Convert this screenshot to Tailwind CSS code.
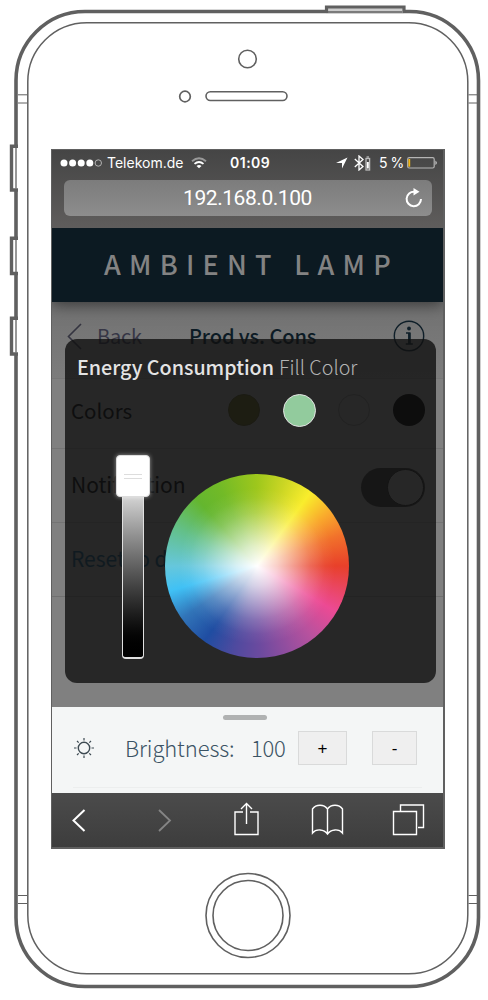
<!DOCTYPE html>
<html lang="en">
<head>
<meta charset="utf-8">
<title>Ambient Lamp</title>
<script src="https://cdn.jsdelivr.net/npm/@tailwindcss/browser@4"></script>
</head>
<body class="bg-white">
<main class="relative h-[1000px] w-[488px] overflow-hidden bg-white pt-[149px] pl-[51px] font-['Noto_Sans_CJK_SC','Noto_Sans',sans-serif]">
  <!-- Device outline -->
  <svg class="absolute top-0 left-0" width="488" height="1000" fill="none" stroke="#606060">
    <rect x="16" y="11.5" width="462.5" height="975" rx="69" stroke-width="3.6"/>
    <rect x="27.8" y="22.7" width="440" height="951" rx="59" stroke-width="1.5"/>
    <path d="M18 94.8H27M18 103H27M468.500 94.800H477M468.500 103H477M18 895.500H27M18 903.500H27M468.500 895.500H477M468.500 903.500H477" stroke-width="1"/>
    <path d="M326 7H404V13.500H326Z" fill="#ccc" stroke="none"/>
    <path d="M328 12H402" stroke-width="1.300"/>
    <path d="M326.500 13V7H404V13" stroke-width="3.200"/>
    <g fill="#fff">
      <path d="M13 146H18V191H13ZM13 238H18V274H13ZM13 318H18V355H13Z" stroke="none"/>
      <path d="M18 146.300H11.500V190H18M18 238.300H11.500V273.500H18M18 318.300H11.500V354H18" stroke-width="3.400"/>
      <path d="M16 148V188.500M16 240V272M16 320V352.500" stroke-width="1.300"/>
    </g>
    <circle cx="247.500" cy="59" r="8.800" stroke-width="1.600"/>
    <circle cx="185" cy="96.500" r="5.300" stroke-width="1.700"/>
    <rect x="206" y="91.700" width="81" height="8.800" rx="4.400" stroke-width="1.600"/>
    <circle cx="248" cy="915.500" r="42" stroke-width="1.600"/>
    <circle cx="248" cy="915.500" r="35" stroke-width="1.600"/>
  </svg>

  <div class="relative flex h-[700px] w-[394px] flex-col overflow-hidden border-t border-r-2 border-b-2 border-l border-[#606060] bg-[#808080]">
    <!-- Browser chrome -->
    <header class="relative z-2 h-[78px] shrink-0 bg-linear-to-b from-[#454545] to-[#5f5d5c] text-white">
      <div class="flex h-[26px] items-center pl-[8px] font-['Inter',sans-serif] text-[14px] leading-none">
        <svg width="42" height="10" fill="#fff"><circle cx="4" cy="5" r="3.500"/><circle cx="12.600" cy="5" r="3.500"/><circle cx="21.200" cy="5" r="3.500"/><circle cx="29.800" cy="5" r="3.500"/><circle cx="38.300" cy="5" r="3.200" fill="none" stroke="#ccc" stroke-width=".8"/></svg>
        <span class="ml-[5px] w-[79px] whitespace-nowrap">Telekom.de</span>
        <svg class="ml-[5px]" width="16" height="12" viewBox="0 0 16 12" fill="none" stroke="#fff" stroke-width="1.800"><path d="M1 4.300Q8-1.700 15 4.300" stroke="#999"/><path d="M3.500 6.900Q8 3 12.500 6.900"/><path d="M8 11.300L5.500 8.900Q8 7 10.500 8.900Z" fill="#fff" stroke="none"/></svg>
        <span class="ml-[23px] w-[42px] font-semibold tracking-[.5px] whitespace-nowrap">01:09</span>
        <svg class="ml-[64px]" width="12" height="12" viewBox="0 0 12 12" fill="#fff"><path d="M11.500.500L0 6H6V11.500Z"/></svg>
        <svg class="ml-[6px]" width="17" height="16" viewBox="0 0 17 16" fill="none" stroke="#fff" stroke-width="1.300"><path d="M.8 4L9 11.500L5 15V1L9 4.500L.8 12"/><rect x="12" y="3.500" width="3.600" height="11.500" stroke="#bbb"/><path d="M12.500 2H15" stroke="#bbb"/><path d="M13.800 7V13.500" stroke-width="2"/></svg>
        <span class="ml-[8px] w-[26px] tracking-[-.5px] whitespace-nowrap">5 %</span>
        <svg class="ml-[2px]" width="31" height="12" fill="none"><rect x=".7" y=".7" width="26.500" height="10.300" rx="1.500" stroke="#b5b5b5" stroke-width="1.200"/><path d="M2.300 2V9.700" stroke="#f5b70f" stroke-width="1.800"/><path d="M28.500 3.500Q31 5.800 28.500 8Z" fill="#ddd"/></svg>
      </div>
      <div class="relative mt-[4px] ml-[12px] flex h-[36px] w-[368px] items-center justify-center rounded-md bg-linear-to-b from-[#7c7c7c] to-[#8d8d8d] pr-[1px] font-['Roboto',sans-serif] text-[21px] leading-none tracking-[-.45px]">
        <span>192.168.0.100</span>
        <svg class="absolute top-[8px] right-[9px]" width="18" height="20" viewBox="0 0 18 20" fill="none" stroke="#fff" stroke-width="2"><path d="M9.500 3.800A7.200 7.200 0 1 0 16 11"/><path d="M8.500 0L14.500 3.800L8.500 7.500Z" fill="#fff" stroke="none"/></svg>
      </div>
    </header>

    <h1 class="z-1 flex h-[74px] shrink-0 items-center bg-[#0c1a22] pb-[3px] pl-[52px] text-[27px] leading-none font-medium tracking-[8.250px] whitespace-nowrap text-[#838383] shadow-[0_3px_14px_rgba(0,0,0,.5)]">AMBIENT LAMP</h1>

    <!-- Settings list -->
    <section class="h-[405px] shrink-0 bg-[#808080] text-[20.500px] leading-none text-[#05080a]">
      <div class="flex h-[77px] items-center border-b border-[#767676] bg-linear-to-b from-[#727272] to-[#7c7c7c] pb-[9px] text-[20px] text-[#363646]">
        <svg class="ml-[15px]" width="16" height="28" fill="none" stroke="#343440" stroke-width="1.600"><path d="M14 2L1.500 14.500L14 27"/></svg>
        <span class="ml-[14px] w-[44px] tracking-[-.2px]">Back</span>
        <span class="ml-[48px] w-[127px] font-medium tracking-[-.1px] whitespace-nowrap text-[#0c1b25]">Prod vs. Cons</span>
        <svg class="ml-[77px]" width="32" height="32" fill="none" stroke="#0f1f29"><circle cx="16" cy="16" r="14.700" stroke-width="1.400"/><circle cx="16" cy="8.500" r="1.900" fill="#0f1f29" stroke="none"/><path d="M13 13H16.800V23.300M12.800 24H19.800" stroke-width="1.500"/><path d="M16.300 13V24" stroke-width="2.500"/></svg>
      </div>
      <div class="flex h-[70px] items-center border-b border-[#747474] pb-[7px] pl-[19px]">
        <span class="w-[157px]">Colors</span>
        <div class="flex gap-[23px]">
          <i class="size-8 rounded-full border border-[#444420] bg-[#53501c]"></i>
          <i class="relative z-20 size-[33px] rounded-full border-[1.500px] border-[#e2e2e2] bg-[#92cb9d]"></i>
          <i class="-ml-px size-8 rounded-full border border-[#666]"></i>
          <i class="size-8 rounded-full bg-[radial-gradient(#000_60%,#000008)] ring-0"></i>
        </div>
      </div>
      <div class="flex h-[74px] items-center border-b border-[#747474] pl-[19px]">
        <span class="w-[290px] pb-[2px] text-[21px] tracking-[-.05px]">Notification</span>
        <div class="mt-[4px] flex h-[39px] w-[64px] justify-end rounded-full bg-[#303030] p-[1px]"><i class="size-[37px] rounded-full border border-[#222] bg-[#808080]"></i></div>
      </div>
      <div class="flex h-[74px] items-center border-b border-[#707070] pb-[2px] pl-[19px] text-[21px] text-[#0f4460]">Reset to default</div>
    </section>

    <!-- Brightness drawer -->
    <section class="relative h-[86px] shrink-0 bg-[#f4f6f6] px-[21px] pt-[8px] text-[22px] leading-none font-light text-[#3b5364]">
      <div class="ml-[150px] h-[5px] w-[44px] rounded-full bg-[#b0b2b2]"></div>
      <div class="mt-[11px] flex h-[34px] items-center">
        <svg class="ml-px" width="20" height="20" fill="none" stroke="#3d4a52" stroke-width="1.400"><circle cx="10" cy="10" r="5.700"/><path d="M10 0V2.500M10 17.500V20M0 10H2.500M17.500 10H20M3 3L4.700 4.700M15.300 15.300L17 17M17 3L15.300 4.700M4.700 15.300L3 17" stroke-width="1.200"/></svg>
        <span class="ml-[31px] w-[110px] pb-[3px] tracking-[-.1px] whitespace-nowrap">Brightness:</span>
        <span class="ml-[16px] w-[34px] pb-[3px] tracking-[-.3px]">100</span>
        <button class="ml-[13px] flex h-[34px] w-[49px] items-center justify-center border border-[#d9dada] bg-[#efefef] font-['Liberation_Sans',sans-serif] text-[17px] text-black">+</button>
        <button class="ml-[25px] flex h-[34px] w-[45px] items-center justify-center border border-[#d9dada] bg-[#efefef] font-['Liberation_Sans',sans-serif] text-[17px] text-black">-</button>
      </div>
      <div class="mt-[22px] h-px bg-[#eceeee]"></div>
    </section>

    <!-- Browser toolbar -->
    <nav class="flex-1 bg-linear-to-b from-[#4b4b4b] to-[#3d3d3d]">
      <svg width="391" height="54" fill="none" stroke="#fff" stroke-width="1.400">
        <path d="M32.500 17L21.500 27.500L32.500 38" stroke-width="2"/>
        <path d="M107 17L118 27.500L107 38" stroke="#858585" stroke-width="1.800"/>
        <path d="M191 19H183V41.500H206V19H198M194.500 31V11M189 16L194.500 10.500L200 16"/>
        <path d="M275.500 16C272 11 264 11 260.500 16V40C264 35.500 272 36 275.500 41C279 36 287 35.500 290.500 40V16C287 11 279 11 275.500 16ZM275.500 16V41"/>
        <path d="M341.500 18.500H364.500V41.500H341.500ZM348.500 18.500V12H371.500V34.500H366"/>
      </svg>
    </nav>

    <!-- Color picker -->
    <section class="absolute top-[189px] left-[13px] z-10 h-[344px] w-[371px] rounded-xl bg-[#101010]/80">
      <h2 class="flex h-[56px] items-center gap-[5px] pl-[12px] text-[19.700px] leading-none font-light whitespace-nowrap text-[#b4b4b4]"><span class="font-medium text-[#e4e4e4]">Energy Consumption</span><span>Fill Color</span></h2>
      <div class="flex pl-[51px]">
        <div class="mt-[60px] flex w-[34px] flex-col items-center">
          <div class="z-1 flex h-[42px] w-[34px] flex-col items-center justify-center gap-[3px] rounded-[4px] border border-[#ddd] bg-white shadow-[0_0_4px_#ffffff80]"><i class="h-px w-[18px] bg-[#ddd]"></i><i class="h-px w-[18px] bg-[#ddd]"></i></div>
          <div class="mt-[-3px] h-[165px] w-[22px] rounded-b-[4px] border-x-[1.500px] border-b-[2px] border-[#e0e0e0] bg-linear-to-b from-[#d8d8d8] to-black"></div>
        </div>
        <div class="mt-[79px] ml-[15px] size-[184px] rounded-full bg-[radial-gradient(circle_closest-side,#fff_0%,rgba(255,255,255,.74)_22%,rgba(255,255,255,.48)_40%,rgba(255,255,255,.22)_58%,rgba(255,255,255,.05)_74%,rgba(255,255,255,0)_85%),conic-gradient(#9ec71c_0deg,#cbd624_18deg,#f9ed2c_36deg,#f9a82c_54deg,#f1702b_70deg,#e8402a_90deg,#ea4660_105deg,#ec4a94_120deg,#b8529e_142deg,#924e9f_160deg,#6c4a9f_178deg,#4f4a9f_195deg,#1f4da2_215deg,#3174b8_235deg,#40c1f5_254deg,#66c7dc_270deg,#63c08a_295deg,#64b62f_318deg,#72ba27_335deg,#9ec71c_360deg)]"></div>
      </div>
    </section>
  </div>
</main>
</body>
</html>
